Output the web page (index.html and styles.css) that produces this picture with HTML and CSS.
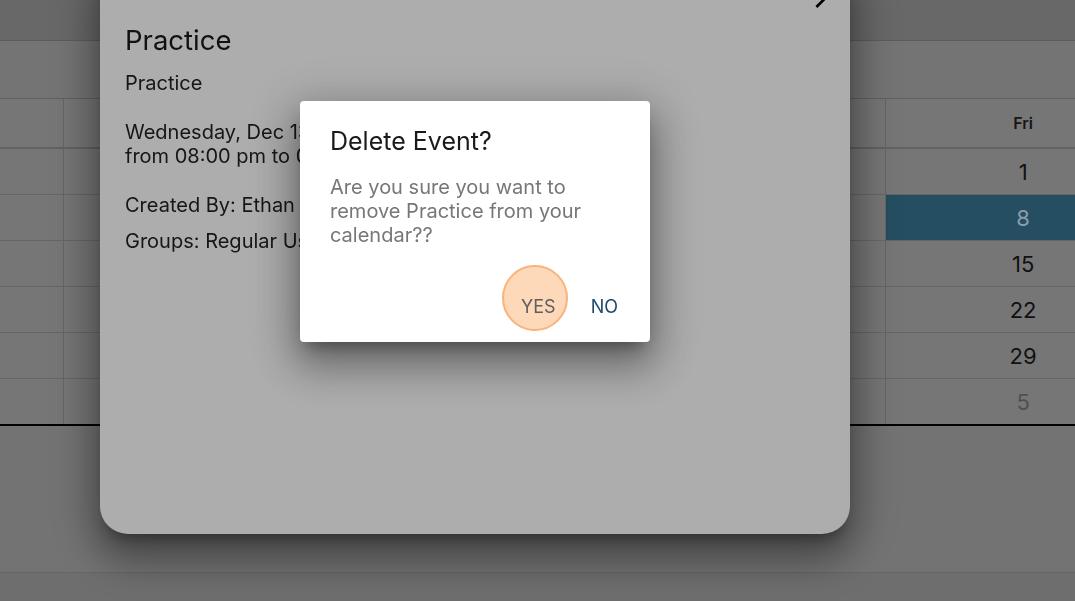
FILE: index.html
```html
<!DOCTYPE html>
<html lang="en">
<head>
<meta charset="utf-8">
<title>Calendar – Delete Event</title>
<link rel="stylesheet" href="styles.css">
</head>
<body>
<div class="app">
  <header class="topbar"></header>
  <div class="toolbar"></div>
  <div class="month">
    <div class="week head">
      <div class="cell">Sun</div><div class="cell">Mon</div><div class="cell">Tue</div><div class="cell">Wed</div><div class="cell">Thu</div><div class="cell">Fri</div><div class="cell">Sat</div>
    </div>
    <div class="week">
      <div class="cell muted">26</div><div class="cell muted">27</div><div class="cell muted">28</div><div class="cell muted">29</div><div class="cell muted">30</div><div class="cell">1</div><div class="cell">2</div>
    </div>
    <div class="week">
      <div class="cell">3</div><div class="cell">4</div><div class="cell">5</div><div class="cell">6</div><div class="cell">7</div><div class="cell selected">8</div><div class="cell">9</div>
    </div>
    <div class="week">
      <div class="cell">10</div><div class="cell">11</div><div class="cell">12</div><div class="cell">13</div><div class="cell">14</div><div class="cell">15</div><div class="cell">16</div>
    </div>
    <div class="week">
      <div class="cell">17</div><div class="cell">18</div><div class="cell">19</div><div class="cell">20</div><div class="cell">21</div><div class="cell">22</div><div class="cell">23</div>
    </div>
    <div class="week">
      <div class="cell">24</div><div class="cell">25</div><div class="cell">26</div><div class="cell">27</div><div class="cell">28</div><div class="cell">29</div><div class="cell">30</div>
    </div>
    <div class="week">
      <div class="cell">31</div><div class="cell muted">1</div><div class="cell muted">2</div><div class="cell muted">3</div><div class="cell muted">4</div><div class="cell muted">5</div><div class="cell muted">6</div>
    </div>
  </div>
  <div class="below"></div>
</div>

<section class="event-modal">
  <div class="modal-head">
    <button class="icon-btn" aria-label="Next">
      <svg viewBox="0 0 24 24" width="32" height="32"><path d="M10 6 8.59 7.41 13.17 12l-4.58 4.59L10 18l6-6z"/></svg>
    </button>
  </div>
  <h1 class="event-title">Practice</h1>
  <p class="event-type">Practice</p>
  <p class="event-when">Wednesday, Dec 13, 2023<br>from 08:00 pm to 09:00 pm</p>
  <p class="event-by">Created By: Ethan Carter</p>
  <p class="event-groups">Groups: Regular Users</p>
</section>

<div class="dialog" role="dialog">
  <h2 class="dialog-title">Delete Event?</h2>
  <p class="dialog-text">Are you sure you want to remove Practice from your calendar??</p>
  <div class="actions">
    <button class="btn yes"><span class="ring"></span><span class="label">YES</span></button>
    <button class="btn no"><span class="label">NO</span></button>
  </div>
</div>
</body>
</html>
```

FILE: styles.css
```css
* { box-sizing: border-box; margin: 0; padding: 0; }
html, body { height: 100%; }
body {
  font-family: Inter, "Noto Sans", sans-serif;
  background: #6e6e6e;
  overflow: hidden;
  color: #111;
}

/* underlying calendar (dimmed) */
.topbar { height: 41px; background: #686868; border-bottom: 1px solid #5c5c5c; }
.toolbar { height: 58px; background: #747474; border-bottom: 1px solid #606060; }
.month {
  margin-left: -485px;
  width: 1921px;
  background: #767676;
  border-bottom: 2px solid #000;
}
.week {
  display: grid;
  grid-template-columns: repeat(7, 274.3px);
  height: 46px;
  border-bottom: 1px solid #666;
}
.week.head { height: 50px; border-bottom: 2px solid #626262; }
.week:last-child { height: 45px; border-bottom: 0; }
.cell {
  border-right: 1px solid #656565;
  display: flex;
  align-items: center;
  justify-content: center;
  font-size: 22px;
  color: #111;
}
.head .cell { font-size: 16px; font-weight: 600; color: #161616; }
.cell.muted { color: #505050; }
.cell.selected { background: #254e62; color: #8a9ca6; }
.below { height: 147px; background: #737373; border-bottom: 1px solid #666; }

/* event details sheet */
.event-modal {
  position: fixed;
  left: 100px;
  top: -44px;
  width: 750px;
  height: 578px;
  background: #adadad;
  border-radius: 28px;
  padding: 0 14px 0 25px;
  box-shadow: 0 11px 15px -7px rgba(0,0,0,.35), 0 24px 38px 3px rgba(0,0,0,.28), 0 9px 46px 8px rgba(0,0,0,.2);
}
.modal-head { height: 60px; display: flex; justify-content: flex-end; align-items: flex-end; }
.icon-btn { background: none; border: 0; width: 32px; height: 32px; display: block; }
.icon-btn svg { display: block; fill: #000; }
.event-title { margin-top: 7px; font-size: 27.5px; line-height: 34px; font-weight: 400; color: #111; }
.event-modal p { font-size: 20px; line-height: 24px; color: #161616; }
.event-type { margin-top: 14px; }
.event-when { margin-top: 25px; }
.event-by { margin-top: 25px; }
.event-groups { margin-top: 12px; }

/* confirm dialog */
.dialog {
  position: fixed;
  left: 300px;
  top: 101px;
  width: 350px;
  background: #fff;
  border-radius: 4px;
  padding: 24px 30px 17px;
  box-shadow: 0 11px 15px -7px rgba(0,0,0,.35), 0 24px 38px 3px rgba(0,0,0,.25), 0 9px 46px 8px rgba(0,0,0,.2);
}
.dialog-title { font-size: 25px; line-height: 32px; font-weight: 400; color: #1a1a1a; }
.dialog-text { margin-top: 18px; font-size: 20px; line-height: 24px; color: #777; }
.actions { display: flex; justify-content: flex-end; gap: 19px; margin-top: 42px; margin-right: -6px; }
.btn {
  position: relative;
  height: 36px;
  padding: 0 8px;
  background: none;
  border: 0;
  font-family: inherit;
  font-size: 18px;
  line-height: 36px;
}
.btn .label { position: relative; }
.btn.yes { color: #5e5e5e; }
.btn.no { color: #1f4a6e; }
.ring {
  position: absolute;
  left: 50%;
  top: 50%;
  width: 66px;
  height: 66px;
  margin-left: -36.5px;
  margin-top: -42px;
  border-radius: 50%;
  background: #fdd8b9;
  border: 2px solid #f9b37b;
}
```
